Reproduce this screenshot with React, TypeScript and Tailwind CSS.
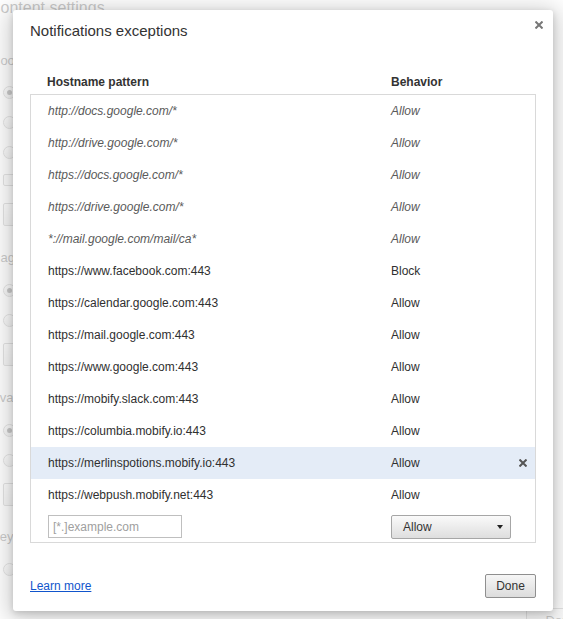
const rows = [
  { host: "http://docs.google.com/*", behavior: "Allow", policy: true },
  { host: "http://drive.google.com/*", behavior: "Allow", policy: true },
  { host: "https://docs.google.com/*", behavior: "Allow", policy: true },
  { host: "https://drive.google.com/*", behavior: "Allow", policy: true },
  { host: "*://mail.google.com/mail/ca*", behavior: "Allow", policy: true },
  { host: "https://www.facebook.com:443", behavior: "Block", policy: false },
  { host: "https://calendar.google.com:443", behavior: "Allow", policy: false },
  { host: "https://mail.google.com:443", behavior: "Allow", policy: false },
  { host: "https://www.google.com:443", behavior: "Allow", policy: false },
  { host: "https://mobify.slack.com:443", behavior: "Allow", policy: false },
  { host: "https://columbia.mobify.io:443", behavior: "Allow", policy: false },
  { host: "https://merlinspotions.mobify.io:443", behavior: "Allow", policy: false, selected: true },
  { host: "https://webpush.mobify.net:443", behavior: "Allow", policy: false },
];

function Radio({ checked }: { checked?: boolean }) {
  return (
    <div className="flex h-[30px] items-center">
      <div className="flex h-[13px] w-[13px] items-center justify-center rounded-full border border-[#999] bg-gradient-to-b from-[#fafafa] to-[#dcdcdc]">
        {checked && <div className="h-[5px] w-[5px] rounded-full bg-[#333]" />}
      </div>
    </div>
  );
}

function PageButton() {
  return <div className="h-[23px] w-[140px] rounded-[2px] border border-[#999] bg-gradient-to-b from-[#fafafa] to-[#dedede]" />;
}

function BackgroundPage() {
  return (
    <div className="flex flex-col pl-[3px] text-[13px] text-[#333]">
      <h1 className="-ml-[14px] h-[16px] text-[16px] leading-[16px]">Content settings</h1>

      <h3 className="-ml-[12px] mt-[37px] h-[16px] leading-[16px]">Cookies</h3>
      <div className="mt-[8px]">
        <Radio checked />
        <Radio />
        <Radio />
      </div>
      <div className="flex h-[26px] items-center">
        <div className="h-[12px] w-[12px] rounded-[2px] border border-[#999] bg-[#f2f2f2]" />
      </div>
      <div className="mt-[10px]">
        <PageButton />
      </div>

      <h3 className="-ml-[17px] mt-[24px] h-[16px] leading-[16px]">Images</h3>
      <div className="mt-[9px]">
        <Radio checked />
        <Radio />
      </div>
      <div className="mt-[8px]">
        <PageButton />
      </div>

      <h3 className="-ml-[17px] mt-[24px] h-[16px] leading-[16px]">JavaScript</h3>
      <div className="mt-[9px]">
        <Radio checked />
        <Radio />
      </div>
      <div className="mt-[8px]">
        <PageButton />
      </div>

      <h3 className="-ml-[12px] mt-[23px] h-[16px] leading-[16px]">Keygen</h3>
      <div className="mt-[9px]">
        <Radio />
      </div>
    </div>
  );
}

function Cross({ className }: { className: string }) {
  return (
    <svg viewBox="0 0 8 8" className={className} fill="none" stroke="currentColor" strokeWidth="2">
      <path d="M0.5 0.5 L7.5 7.5 M7.5 0.5 L0.5 7.5" />
    </svg>
  );
}

export default function App() {
  return (
    <div className="relative h-[619px] w-[563px] overflow-hidden bg-white font-['Liberation_Sans',Arial,sans-serif]">
      <BackgroundPage />

      {/* page's own done button peeking out */}
      <div className="absolute left-[526px] top-[608px] flex h-[26px] w-[70px] items-center justify-center rounded-[2px] border border-[#999] bg-gradient-to-b from-[#fafafa] to-[#dedede] text-[13px] text-[#333]">
        Done
      </div>

      <div className="absolute inset-0 bg-white/75" />

      {/* ================= DIALOG ================= */}
      <div className="absolute left-[13px] top-[10px] flex w-[540px] flex-col rounded-[3px] bg-white px-[17px] pb-[13px] shadow-[0_4px_23px_5px_rgba(0,0,0,0.2),0_2px_6px_rgba(0,0,0,0.15)]">
        <button className="absolute right-[10px] top-[11px] text-[#777]">
          <Cross className="block h-[8px] w-[8px]" />
        </button>

        <h2 className="mt-[12px] h-[18px] text-[15px] leading-[18px] text-[#333]">Notifications exceptions</h2>

        <div className="mt-[34px] flex h-[16px] pl-[17px] text-[12px] font-bold leading-[16px] text-[#333]">
          <div className="w-[344px]">Hostname pattern</div>
          <div>Behavior</div>
        </div>

        <div className="mt-[4px] border border-[#d9d9d9] text-[12px]">
          {rows.map((row) => (
            <div
              key={row.host}
              className={`flex h-[32px] items-center pl-[17px] ${row.selected ? "bg-[#e4ecf7]" : ""} ${
                row.policy ? "italic text-[#5a5a5a]" : "text-[#303030]"
              }`}
            >
              <div className="w-[343px]">{row.host}</div>
              <div className="flex-1">{row.behavior}</div>
              {row.selected && <Cross className="mr-[8px] h-[8px] w-[8px] text-[#555]" />}
            </div>
          ))}

          <div className="flex h-[31px] items-center pl-[17px]">
            <div className="w-[343px]">
              <input
                placeholder="[*.]example.com"
                className="h-[23px] w-[134px] border border-[#bfbfbf] px-[4px] text-[12px] text-[#333] outline-none placeholder:text-[#a0a0a0]"
              />
            </div>
            <div className="flex h-[24px] w-[120px] items-center justify-between rounded-[2px] border border-[#a6a6a6] bg-gradient-to-b from-[#fafafa] to-[#dedede] pl-[11px] pr-[7px] text-[#333]">
              <span>Allow</span>
              <svg viewBox="0 0 6 4" className="h-[4px] w-[6px]">
                <path d="M0 0 H6 L3 4 Z" fill="#222" />
              </svg>
            </div>
          </div>
        </div>

        <div className="mt-[31px] flex h-[24px] items-center justify-between text-[12px]">
          <a href="#" className="text-[#15c] underline">
            Learn more
          </a>
          <button className="h-[24px] w-[51px] rounded-[2px] border border-[#8f8f8f] bg-gradient-to-b from-[#f6f6f6] to-[#dcdcdc] text-[12px] text-[#333]">
            Done
          </button>
        </div>
      </div>
    </div>
  );
}
